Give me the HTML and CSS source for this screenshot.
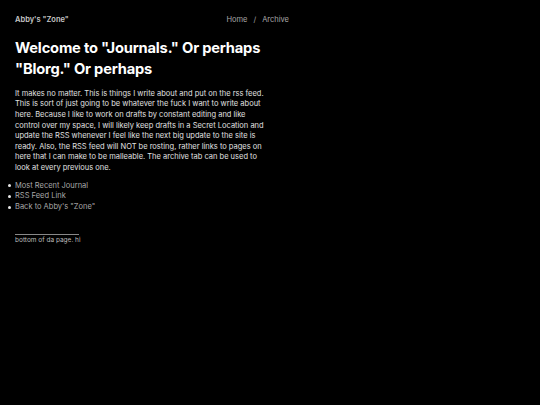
FILE: index.html
```html
<!DOCTYPE html>
<html lang="en">
<head>
<meta charset="utf-8">
<title>Journals</title>
<link rel="stylesheet" href="styles.css">
</head>
<body>
<div class="page">
  <header class="site-header">
    <a class="site-title" href="#">Abby's "Zone"</a>
    <nav class="site-nav">
      <a href="#">Home</a>
      <span class="sep">/</span>
      <a href="#">Archive</a>
    </nav>
  </header>
  <main class="content">
    <h1 class="title">Welcome to "Journals." Or perhaps "Blorg." Or perhaps</h1>
    <p class="intro">It makes no matter. This is things I write about and put on the rss feed. This is sort of just going to be whatever the fuck I want to write about here. Because I like to work on drafts by constant editing and like control over my space, I will likely keep drafts in a Secret Location and update the RSS whenever I feel like the next big update to the site is ready. Also, the RSS feed will NOT be rosting, rather links to pages on here that I can make to be malleable. The archive tab can be used to look at every previous one.</p>
    <ul class="links">
      <li><a href="#">Most Recent Journal</a></li>
      <li><a href="#">RSS Feed Link</a></li>
      <li><a href="#">Back to Abby's "Zone"</a></li>
    </ul>
  </main>
  <footer class="site-footer">
    <hr class="rule">
    <p class="footnote">bottom of da page. hi</p>
  </footer>
</div>
</body>
</html>
```
FILE: styles.css
```css
html, body {
  margin: 0;
  padding: 0;
  background: #000;
}
body {
  font-family: Inter, "Liberation Sans", sans-serif;
  color: #d8d8d8;
}
a {
  text-decoration: none;
}
.page {
  width: 274px;
  padding: 14px 15px;
}
.site-header {
  display: flex;
  justify-content: space-between;
  align-items: center;
  font-size: 7.5px;
  line-height: 12px;
}
.site-title {
  color: #c8c8c8;
  font-weight: 600;
}
.site-nav {
  display: flex;
  gap: 6px;
  color: #a0a0a0;
}
.site-nav a {
  color: #a8a8a8;
}
.content {
  max-width: 252px;
}
.title {
  margin: 12px 0 0;
  font-size: 14.7px;
  line-height: 21.4px;
  font-weight: 700;
  color: #fff;
  letter-spacing: -0.2px;
}
.intro {
  margin: 8px 0 0;
  font-size: 7.5px;
  line-height: 10.6px;
  color: #e0e0e0;
}
.links {
  margin: 7px 0 0;
  padding: 0;
  list-style: none;
  font-size: 7.5px;
  line-height: 10.6px;
  color: #e0e0e0;
}
.links li {
  display: flex;
  align-items: center;
}
.links li::before {
  content: "";
  width: 3px;
  height: 3px;
  border-radius: 50%;
  background: #e8e8e8;
  margin-left: -7px;
  margin-right: 4px;
  flex: none;
}
.links a {
  color: #a8a8a8;
}
.site-footer {
  margin-top: 22px;
}
.rule {
  width: 64px;
  margin: 0;
  border: 0;
  border-top: 1px solid #888;
}
.footnote {
  margin: 1px 0 0;
  font-size: 6.5px;
  line-height: 9px;
  color: #bbb;
}
```
